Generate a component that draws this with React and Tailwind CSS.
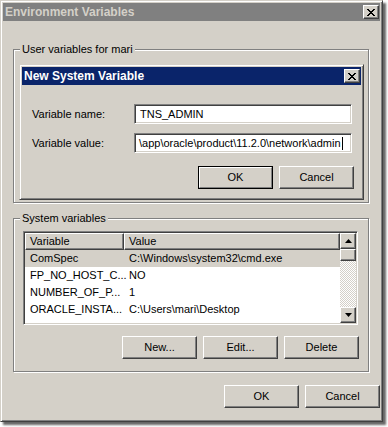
import React from 'react';

const raised = 'border border-t-white border-l-white border-r-[#404040] border-b-[#404040] shadow-[inset_-1px_-1px_#808080]';
const sunken = 'border border-t-[#808080] border-l-[#808080] border-r-white border-b-white shadow-[inset_1px_1px_#404040,inset_-1px_-1px_#d4d0c8]';
const frame = 'border border-t-[#d4d0c8] border-l-[#d4d0c8] border-r-[#404040] border-b-[#404040]';

const CloseX = () => (
    <svg width="8" height="7" viewBox="0 0 8 7">
        <path d="M0 0h2v1h1v1h2V1h1V0h2v1H7v1H6v1H5v1h1v1h1v1h1v1H6V6H5V5H3v1H2v1H0V6h1V5h1V4h1V3H2V2H1V1H0z" fill="#000" />
    </svg>
);

const CloseButton = () => (
    <div className={`w-[16px] h-[14px] bg-[#d4d0c8] flex items-center justify-center ${raised}`}>
        <CloseX />
    </div>
);

const Button = ({ children, isDefault, className = '' }) => (
    isDefault ? (
        <div className={`w-[75px] h-[23px] border border-black ${className}`}>
            <div className="w-full h-full border border-t-white border-l-white border-r-[#808080] border-b-[#808080] flex items-center justify-center">
                {children}
            </div>
        </div>
    ) : (
        <div className={`w-[75px] h-[23px] flex items-center justify-center ${raised} ${className}`}>
            {children}
        </div>
    )
);

const GroupBox = ({ label, className = '', children }) => (
    <div className={`relative border border-[#808080] shadow-[inset_1px_1px_#fff,1px_1px_#fff] ${className}`}>
        <span className="absolute left-[6px] -top-[7px] px-[2px] bg-[#d4d0c8] leading-[13px]">{label}</span>
        {children}
    </div>
);

const Arrow = ({ down }) => (
    <svg width="7" height="4" viewBox="0 0 7 4">
        <polygon points={down ? '0,0 7,0 3.5,4' : '3.5,0 7,4 0,4'} fill="#000" />
    </svg>
);

const rows = [
    ['ComSpec', 'C:\\Windows\\system32\\cmd.exe', true],
    ['FP_NO_HOST_C...', 'NO'],
    ['NUMBER_OF_P...', '1'],
    ['ORACLE_INSTA...', 'C:\\Users\\mari\\Desktop'],
];

const App = () => {
    return (
        <div
            className="w-[388px] h-[427px] bg-white text-[11px] text-black"
            style={{ fontFamily: '"Liberation Sans", Arial, sans-serif' }}
        >
            {/* Environment Variables window */}
            <div className={`w-[383px] h-[422px] bg-[#d4d0c8] p-[2px] ${frame} shadow-[inset_1px_1px_#fff,inset_-1px_-1px_#808080,3px_3px_2px_rgba(0,0,0,0.6)]`}>
                {/* Title bar (inactive) */}
                <div className="h-[18px] bg-[#808080] flex items-center justify-between pl-[2px] pr-[1px]">
                    <span className="font-bold text-[12px] text-[#d4d0c8]">Environment Variables</span>
                    <CloseButton />
                </div>

                <div className="pl-[10px] pt-[28px]">
                    {/* User variables group, New System Variable dialog on top */}
                    <GroupBox label="User variables for mari" className="w-[356px] h-[154px] pl-[5px] pt-[14px]">
                        <div className={`w-[345px] h-[136px] p-[2px] ${frame} shadow-[inset_1px_1px_#fff,inset_-1px_-1px_#808080]`}>
                            <div className="h-[18px] bg-[#0a246a] flex items-center justify-between pl-[2px] pr-[1px]">
                                <span className="font-bold text-[12px] text-white">New System Variable</span>
                                <CloseButton />
                            </div>

                            <div className="pl-[10px] pr-[7px] pt-[19px]">
                                <div className="flex items-center">
                                    <span className="w-[102px]">Variable name:</span>
                                    <div className={`w-[218px] h-[20px] bg-white flex items-center pl-[5px] ${sunken}`}>
                                        TNS_ADMIN
                                    </div>
                                </div>
                                <div className="flex items-center mt-[9px]">
                                    <span className="w-[102px]">Variable value:</span>
                                    <div className={`w-[218px] h-[20px] bg-white flex items-center pl-[4px] ${sunken}`}>
                                        <span className="whitespace-nowrap">\app\oracle\product\11.2.0\network\admin</span>
                                        <span className="w-px h-[13px] bg-black shrink-0 ml-px" />
                                    </div>
                                </div>
                                <div className="flex justify-end gap-[6px] mt-[13px]">
                                    <Button isDefault>OK</Button>
                                    <Button>Cancel</Button>
                                </div>
                            </div>
                        </div>
                    </GroupBox>

                    {/* System variables group */}
                    <GroupBox label="System variables" className="w-[356px] h-[154px] mt-[15px] pl-[9px] pt-[12px]">
                        <div className={`w-[335px] h-[94px] bg-white flex ${sunken} p-px`}>
                            <div className="flex-1 overflow-hidden">
                                <div className="flex h-[17px] bg-[#d4d0c8]">
                                    <div className={`w-[99px] flex items-center pl-[4px] ${raised}`}>Variable</div>
                                    <div className={`flex-1 flex items-center pl-[4px] ${raised}`}>Value</div>
                                </div>
                                {rows.map(([name, value, selected]) => (
                                    <div key={name} className={`flex h-[17px] items-center ${selected ? 'bg-[#d4d0c8]' : ''}`}>
                                        <span className="w-[99px] pl-[5px] whitespace-nowrap">{name}</span>
                                        <span className="pl-[5px] whitespace-nowrap">{value}</span>
                                    </div>
                                ))}
                            </div>
                            {/* Scrollbar */}
                            <div className="w-[16px] flex flex-col">
                                <div className={`h-[16px] bg-[#d4d0c8] flex items-center justify-center ${raised}`}>
                                    <Arrow />
                                </div>
                                <div className="flex-1 flex flex-col bg-[repeating-conic-gradient(#d4d0c8_0%_25%,#ffffff_0%_50%)] bg-size-[2px_2px]">
                                    <div className={`h-[12px] bg-[#d4d0c8] ${raised}`} />
                                </div>
                                <div className={`h-[16px] bg-[#d4d0c8] flex items-center justify-center ${raised}`}>
                                    <Arrow down />
                                </div>
                            </div>
                        </div>

                        <div className="flex justify-end gap-[6px] mt-[11px] pr-[9px]">
                            <Button>New...</Button>
                            <Button>Edit...</Button>
                            <Button>Delete</Button>
                        </div>
                    </GroupBox>

                    {/* Dialog buttons */}
                    <div className="flex justify-end gap-[6px] mt-[13px] w-[367px]">
                        <Button>OK</Button>
                        <Button>Cancel</Button>
                    </div>
                </div>
            </div>
        </div>
    );
};

export default App;
